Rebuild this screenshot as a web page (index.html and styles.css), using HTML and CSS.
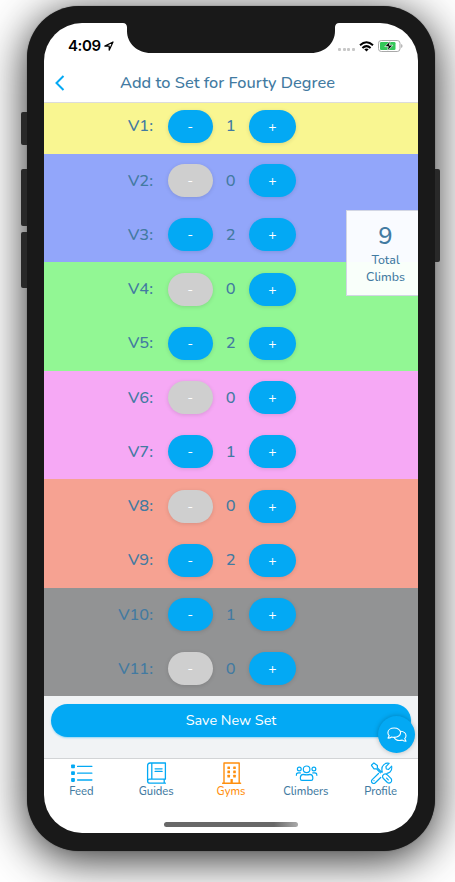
FILE: index.html
```html
<!DOCTYPE html>
<html lang="en">
<head>
<meta charset="utf-8">
<title>Add to Set for Fourty Degree</title>
<link rel="stylesheet" href="styles.css">
</head>
<body>
<div class="phone">
  <i class="key key-mute"></i><i class="key key-up"></i><i class="key key-down"></i><i class="key key-power"></i>
  <div class="screen">
    <svg class="notch" viewBox="0 0 216 30" width="216" height="30"><path fill="#191919" d="M0 0H216Q212.500 0 212 4V8C212 20 202 30 188 30H28C14 30 4 20 4 8V4Q3.500 0 0 0Z"/></svg>
    <div class="status">
      <span class="time">4:09</span>
      <svg class="loc" viewBox="0 0 10 10" width="10" height="10"><path d="M.8 5.100 9 1 5.200 9.200V5.100Z" fill="none" stroke="#000" stroke-width="1.200" stroke-linejoin="round"/></svg>
      <span class="dots"><i></i><i></i><i></i><i></i></span>
      <svg class="wifi" viewBox="0 0 15 11" width="15" height="11"><g fill="none" stroke="#000" stroke-width="2"><path d="M1 4.200Q7.500-1.800 14 4.200"/><path d="M3.400 7Q7.500 3.200 11.600 7"/></g><path d="M5.300 8.300Q7.500 6.800 9.700 8.300L7.500 10.600Z"/></svg>
      <svg class="battery" viewBox="0 0 25 12" width="25" height="12"><rect x=".5" y=".5" width="21.500" height="11" rx="2.800" fill="#fff" stroke="#a9a9a9"/><rect x="2" y="2" width="15.500" height="8" rx="1.300" fill="#34c759"/><path d="M23.200 4v4q1.300-.6 1.300-2t-1.300-2" fill="#a9a9a9"/><path d="M12.300 1 6.800 6.600h3.500L9.300 11l5.600-5.800h-3.600Z" stroke="#fff" stroke-width=".7"/></svg>
    </div>
    <header class="nav">
      <svg class="back" viewBox="0 0 10 16" width="10" height="16"><path d="M8.500 1 1.500 8l7 7" fill="none" stroke="#03a9f4" stroke-width="2"/></svg>
      <h1>Add to Set for Fourty Degree</h1>
    </header>
    <main class="grades">
      <section class="band yellow">
        <div class="row"><span class="grade">V1:</span><button class="minus">-</button><span class="count">1</span><button class="plus">+</button></div>
      </section>
      <section class="band blue">
        <div class="row"><span class="grade">V2:</span><button class="minus off">-</button><span class="count">0</span><button class="plus">+</button></div>
        <div class="row"><span class="grade">V3:</span><button class="minus">-</button><span class="count">2</span><button class="plus">+</button></div>
      </section>
      <section class="band green">
        <div class="row"><span class="grade">V4:</span><button class="minus off">-</button><span class="count">0</span><button class="plus">+</button></div>
        <div class="row"><span class="grade">V5:</span><button class="minus">-</button><span class="count">2</span><button class="plus">+</button></div>
      </section>
      <section class="band pink">
        <div class="row"><span class="grade">V6:</span><button class="minus off">-</button><span class="count">0</span><button class="plus">+</button></div>
        <div class="row"><span class="grade">V7:</span><button class="minus">-</button><span class="count">1</span><button class="plus">+</button></div>
      </section>
      <section class="band red">
        <div class="row"><span class="grade">V8:</span><button class="minus off">-</button><span class="count">0</span><button class="plus">+</button></div>
        <div class="row"><span class="grade">V9:</span><button class="minus">-</button><span class="count">2</span><button class="plus">+</button></div>
      </section>
      <section class="band gray">
        <div class="row"><span class="grade">V10:</span><button class="minus">-</button><span class="count">1</span><button class="plus">+</button></div>
        <div class="row"><span class="grade">V11:</span><button class="minus off">-</button><span class="count">0</span><button class="plus">+</button></div>
      </section>
      <aside class="total"><strong>9</strong><span>Total</span><span>Climbs</span></aside>
    </main>
    <div class="save-area">
      <button class="save">Save New Set</button>
      <button class="chat" aria-label="Chat">
        <svg viewBox="0 0 20 16" width="20" height="16" fill="none" stroke="#fff" stroke-width="1.100" stroke-linejoin="round" stroke-linecap="round"><path d="M7.200 1C3.600 1 .9 3 .9 5.700c0 1.200.5 2.200 1.300 3L1 11.100c1.600 0 2.800-.5 3.600-1.100.8.300 1.700.4 2.600.4 3.600 0 6.400-2 6.400-4.700S10.800 1 7.200 1Z"/><path d="M13.700 4.200c3 .2 5.300 2.100 5.300 4.500 0 1.200-.5 2.200-1.300 2.900L19 14.200c-1.600 0-2.800-.5-3.700-1.100-3.600.9-6.900-.3-8.100-2.700"/></svg>
      </button>
    </div>
    <nav class="tabs">
      <a class="tab"><svg viewBox="0 0 22 22" width="22" height="22"><g fill="#03a9f4"><rect x=".5" y="2.500" width="3.800" height="3.800" rx=".8"/><rect x=".5" y="9.300" width="3.800" height="3.800" rx=".8"/><rect x=".5" y="16.100" width="3.800" height="3.800" rx=".8"/></g><path d="M7 4.400h14.500M7 11.200h14.500M7 18h14.500" stroke="#03a9f4" stroke-width="1.300" stroke-linecap="round"/></svg><span>Feed</span></a>
      <a class="tab"><svg viewBox="0 0 22 22" width="22" height="22" fill="none" stroke="#03a9f4" stroke-width="1.300" stroke-linecap="round" stroke-linejoin="round"><path d="M19.800 17.200V1H4.500Q2 1 2 3.500V19q0 2.200 2.500 2.200h15.300M19.800 17.200H4.200Q2 17.200 2 19.200M18.600 17.500v3.500M6.200 1v16M9.500 6.800h7M9.500 9.400h7"/></svg><span>Guides</span></a>
      <a class="tab active"><svg viewBox="0 0 22 22" width="22" height="22"><path d="M2 21.200h18M3.400 21V1h15.200v20" fill="none" stroke="#ff8f0e" stroke-width="1.400" stroke-linecap="round" stroke-linejoin="round"/><g fill="#ff8f0e"><rect x="6.800" y="4.400" width="2.600" height="2.600" rx=".5"/><rect x="12.600" y="4.400" width="2.600" height="2.600" rx=".5"/><rect x="6.800" y="8.600" width="2.600" height="2.600" rx=".5"/><rect x="12.600" y="8.600" width="2.600" height="2.600" rx=".5"/><rect x="6.800" y="12.800" width="2.600" height="2.600" rx=".5"/><rect x="12.600" y="12.800" width="2.600" height="2.600" rx=".5"/><rect x="9.900" y="17" width="2.300" height="4.200"/></g></svg><span>Gyms</span></a>
      <a class="tab"><svg viewBox="0 0 22 22" width="22" height="22" fill="none" stroke="#03a9f4" stroke-width="1.200" stroke-linecap="round" stroke-linejoin="round"><circle cx="11" cy="7.300" r="3.300"/><circle cx="3.700" cy="7" r="1.900"/><circle cx="18.300" cy="7" r="1.900"/><path d="M7.700 12.400q3.300 1 6.600 0 2.900.3 2.900 3.100v1.200q0 1.600-1.600 1.600H6.400q-1.600 0-1.600-1.600v-1.200q0-2.800 2.900-3.100ZM.6 13.400q0-2.500 2.200-2.500h2M21.400 13.400q0-2.500-2.200-2.500h-2"/></svg><span>Climbers</span></a>
      <a class="tab"><svg viewBox="0 0 22 22" width="22" height="22" fill="none" stroke="#03a9f4" stroke-width="1.200" stroke-linecap="round" stroke-linejoin="round"><path d="M.8 3.300 3.300.9l3.500 2.600v2.400l4 4.100M.8 3.300l2.600 3.500h2.500l3.900 4M13.400 12.200q1.700-.8 3.100.5l4 4q1.300 1.900-.2 3.500-1.700 1.500-3.500.3l-4-4q-1.400-1.500-.5-3.200ZM11.700 10.200q-1.400-5 1.600-7.600 2.300-2 5.200-1.200l-3.200 3.300.4 2.300 2.300.4 3.100-3.200q.8 3.300-1.700 5.800-1.400 1.200-3 1.300M7.900 11.500 1.600 17.600q-1.500 1.700-.1 3.200 1.600 1.400 3.200 0l5.400-5.300M3.400 18.600v.1M16 16.200l1.700 1.700"/></svg><span>Profile</span></a>
    </nav>
    <i class="home"></i>
  </div>
</div>
</body>
</html>
```
FILE: styles.css
```css
* { box-sizing: border-box; }
body {
  margin: 0;
  width: 455px;
  height: 882px;
  padding: 6px 20px 0 27px;
  overflow: hidden;
  background: #fff;
  font-family: Nunito, "Noto Sans", sans-serif;
  color: #427aa1;
}
button { border: 0; padding: 0; font-family: inherit; color: #fff; background: #03a9f4; }
.phone {
  position: relative;
  width: 408px;
  height: 845px;
  padding: 17px;
  border-radius: 52px;
  background: #191919;
  box-shadow: 0 0 1px 0 #333, 0 8px 46px rgba(0, 0, 0, .85);
}
.key { position: absolute; left: -6px; width: 6px; background: #292929; border-radius: 2px 0 0 2px; }
.key-mute { top: 106px; height: 33px; }
.key-up { top: 163px; height: 57px; }
.key-down { top: 226px; height: 56px; }
.key-power { left: 408px; top: 163px; width: 5px; height: 93px; border-radius: 0 2px 2px 0; }
.screen {
  position: relative;
  width: 374px;
  height: 810px;
  overflow: hidden;
  border-radius: 38px;
  background: #fff;
  display: flex;
  flex-direction: column;
}
.notch { position: absolute; left: 79px; top: 0; }
.status {
  height: 44px;
  flex: none;
  display: flex;
  align-items: center;
  padding: 2px 15px 0 24px;
}
.time { font: 600 15px/20px Inter, sans-serif; color: #000; letter-spacing: -.4px; width: 36px; }
.dots { display: flex; gap: 1.700px; margin: 7px 4px 0 auto; }
.dots i { width: 3px; height: 3px; border-radius: 1px; background: #c7c7c7; }
.wifi { margin-right: 4px; }
.nav {
  flex: none;
  height: 36px;
  border-bottom: 1px solid #dcdcdc;
  position: relative;
  display: flex;
  align-items: center;
  justify-content: center;
  padding-bottom: 3px;
}
.back { position: absolute; left: 11px; top: 8px; }
h1 { margin: 0; padding-right: 7px; font-size: 16.400px; line-height: 22px; font-weight: 500; white-space: nowrap; }
.grades {
  position: relative;
  flex: none;
  height: 593px;
  display: flex;
  flex-direction: column;
  justify-content: flex-end;
}
.band.yellow { height: 50.5px; display: flex; flex-direction: column; justify-content: flex-end; }
.row { height: 54.250px; flex: none; display: flex; align-items: center; }
.yellow { background: #f9f691; }
.blue { background: #92a6fa; }
.green { background: #92f794; }
.pink { background: #f6a9f5; }
.red { background: #f6a292; }
.gray { background: #929394; }
.grade { width: 109px; text-align: right; font-size: 16.400px; line-height: 24px; font-weight: 500; }
.row button { height: 33px; border-radius: 16.500px; font-size: 14px; line-height: 33px; box-shadow: 0 1px 4px rgba(0, 0, 0, .12); }
.minus { width: 44.500px; margin-left: 15px; }
.plus { width: 47px; }
.row .off { background: #cfcfcf; }
.count { width: 36.500px; text-align: center; font-size: 16.400px; line-height: 24px; font-weight: 500; }
.total {
  position: absolute;
  right: 0;
  top: 107px;
  width: 72px;
  height: 86px;
  padding: 10px 0 0 6px;
  display: flex;
  flex-direction: column;
  align-items: center;
  background: rgba(255, 255, 255, .95);
  border: 1px solid #d2d6e4;
  border-right: 0;
  font-size: 12.400px;
  line-height: 17.300px;
  font-weight: 500;
}
.total strong { font-size: 24px; line-height: 30px; font-weight: 500; }
.save-area {
  position: relative;
  flex: none;
  height: 62px;
  padding: 8px 7px 0;
  background: #f1f3f5;
}
.save { display: block; width: 360px; height: 33px; border-radius: 17px; font-size: 14.400px; line-height: 33px; box-shadow: 0 1px 2px rgba(3, 169, 244, .4); }
.chat {
  position: absolute;
  left: 334px;
  top: 20px;
  width: 37px;
  height: 37px;
  border-radius: 50%;
  display: grid;
  place-items: center;
  box-shadow: 0 0 5px rgba(0, 0, 0, .25);
}
.tabs { display: flex; height: 75px; border-top: 1px solid #d2d4d6; padding-top: 3px; }
.tab { flex: 1; display: flex; flex-direction: column; align-items: center; font-size: 11.200px; line-height: 16px; font-weight: 500; }
.tab svg { display: block; transform: translateX(.6px); }
.active { color: #ff8f0e; }
.home { position: absolute; left: 120px; top: 799px; width: 134px; height: 5px; border-radius: 3px; background: linear-gradient(90deg, #686868 0 82%, #aaa); }
```
